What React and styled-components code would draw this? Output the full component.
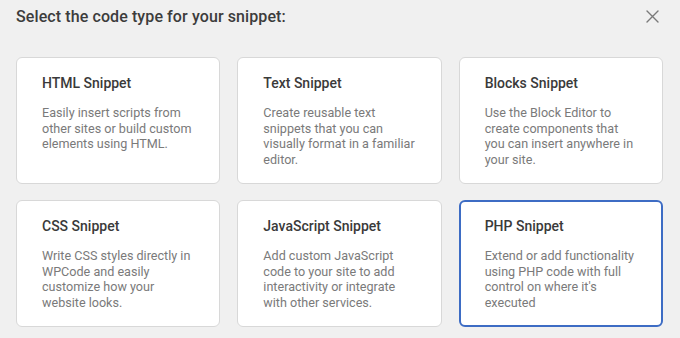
import React from 'react';
import styled, { createGlobalStyle } from 'styled-components';

const GlobalStyle = createGlobalStyle`
  html, body {
    margin: 0;
    padding: 0;
    background: #f0f0f0;
  }
  body {
    font-family: Roboto, "Liberation Sans", sans-serif;
    -webkit-font-smoothing: antialiased;
  }
`;

const Modal = styled.div`
  width: 680px;
  height: 338px;
  box-sizing: border-box;
  background: #f0f0f0;
  padding: 0 17px 0 16px;
  overflow: hidden;
`;

const Header = styled.div`
  display: flex;
  align-items: center;
  justify-content: space-between;
  height: 32px;
  margin-bottom: 25px;
`;

const Title = styled.h2`
  margin: 0;
  font-size: 16px;
  font-weight: 500;
  color: #3c3c3c;
  letter-spacing: 0.1px;
`;

const CloseButton = styled.button`
  border: 0;
  background: none;
  padding: 0;
  margin-right: 3px;
  width: 16px;
  height: 16px;
  display: flex;
  align-items: center;
  justify-content: center;
  color: #7a7a7a;
  cursor: pointer;
`;

const Grid = styled.div`
  display: grid;
  grid-template-columns: repeat(3, 1fr);
  column-gap: 17px;
  row-gap: 16px;
`;

const Card = styled.div`
  height: 127px;
  box-sizing: border-box;
  background: #fff;
  border: ${p => (p.$active ? '2px solid #3d6cc4' : '1px solid #d8d8d8')};
  border-radius: 6px;
  padding: ${p => (p.$active ? '16px 24px 0 24px' : '17px 25px 0 25px')};
`;

const CardTitle = styled.h3`
  margin: 0 0 13px;
  font-size: 14px;
  font-weight: 500;
  line-height: 17px;
  color: #3a3a3a;
`;

const CardText = styled.p`
  margin: 0;
  font-size: 12.6px;
  line-height: 15.5px;
  color: #7a7a7a;
`;

const snippets = [
  {
    title: 'HTML Snippet',
    text: 'Easily insert scripts from other sites or build custom elements using HTML.',
  },
  {
    title: 'Text Snippet',
    text: 'Create reusable text snippets that you can visually format in a familiar editor.',
  },
  {
    title: 'Blocks Snippet',
    text: 'Use the Block Editor to create components that you can insert anywhere in your site.',
  },
  {
    title: 'CSS Snippet',
    text: 'Write CSS styles directly in WPCode and easily customize how your website looks.',
  },
  {
    title: 'JavaScript Snippet',
    text: 'Add custom JavaScript code to your site to add interactivity or integrate with other services.',
  },
  {
    title: 'PHP Snippet',
    text: "Extend or add functionality using PHP code with full control on where it's executed",
    active: true,
  },
];

export default function App() {
  return (
    <>
      <GlobalStyle />
      <Modal>
        <Header>
          <Title>Select the code type for your snippet:</Title>
          <CloseButton aria-label="Close">
            <svg width="13" height="13" viewBox="0 0 13 13">
              <path d="M1 1L12 12M12 1L1 12" stroke="currentColor" strokeWidth="1.4" strokeLinecap="round" />
            </svg>
          </CloseButton>
        </Header>
        <Grid>
          {snippets.map(s => (
            <Card key={s.title} $active={s.active}>
              <CardTitle>{s.title}</CardTitle>
              <CardText>{s.text}</CardText>
            </Card>
          ))}
        </Grid>
      </Modal>
    </>
  );
}
